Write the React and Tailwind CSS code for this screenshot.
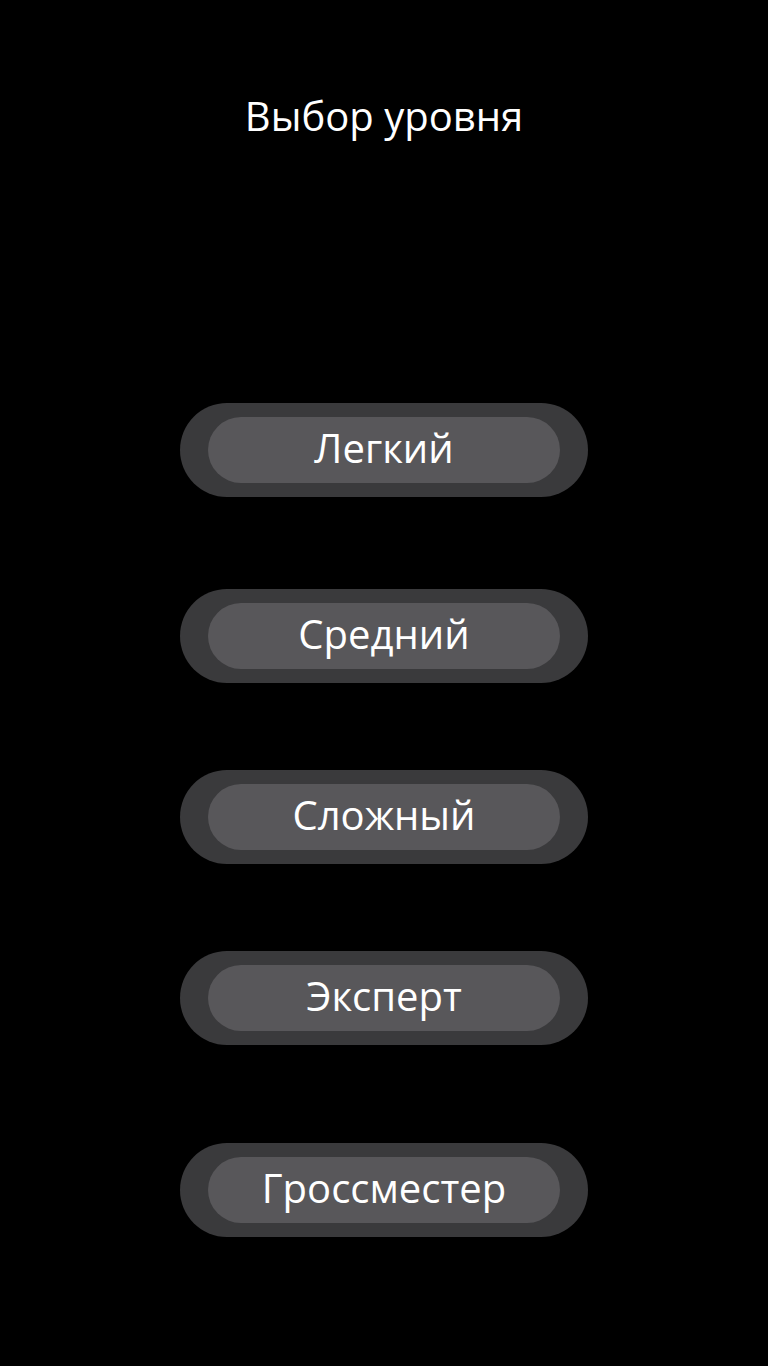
const levels = [
  { label: 'Легкий', mt: 'mt-0' },
  { label: 'Средний', mt: 'mt-[92px]' },
  { label: 'Сложный', mt: 'mt-[87px]' },
  { label: 'Эксперт', mt: 'mt-[87px]' },
  { label: 'Гроссместер', mt: 'mt-[98px]' },
];

export default function App() {
  return (
    <div
      className="min-h-[1366px] w-full bg-black flex flex-col items-center"
      style={{ fontFamily: '"Open Sans", "Noto Sans", sans-serif' }}
    >
      {/* Header */}
      <h1 className="mt-[90px] text-[40px] leading-[52px] font-normal text-white">
        Выбор уровня
      </h1>

      {/* Levels */}
      <div className="mt-[261px] flex flex-col items-center">
        {levels.map((lvl) => (
          <button
            key={lvl.label}
            className={`${lvl.mt} w-[408px] h-[94px] rounded-full bg-[#3a3a3c] px-[28px] py-[14px] flex items-center`}
          >
            <span className="w-full h-[66px] rounded-full bg-[#58575a] flex items-center justify-center text-[40px] text-white leading-none pb-[4px]">
              {lvl.label}
            </span>
          </button>
        ))}
      </div>
    </div>
  );
}
